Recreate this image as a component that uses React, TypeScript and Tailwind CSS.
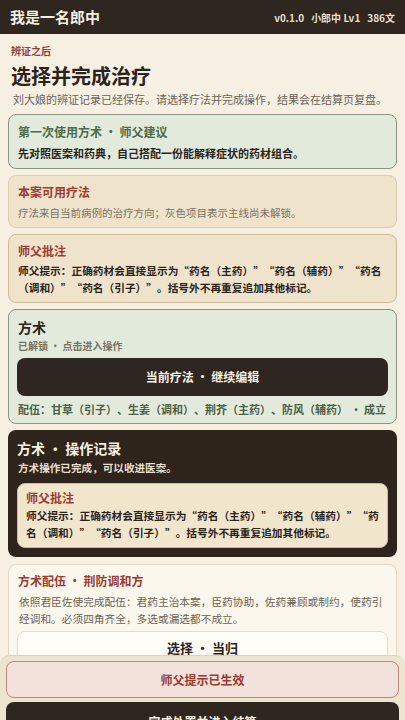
import React from 'react'

const font = { fontFamily: '"Noto Sans CJK SC", "Noto Sans", sans-serif' }

const hint =
  '师父提示：正确药材会直接显示为“药名（主药）”“药名（辅药）”“药名（调和）”“药名（引子）”。括号外不再重复追加其他标记。'

export default function App() {
  return (
    <div lang="zh-CN" className="min-h-screen bg-[#f6efe2] text-[#2b241d] pb-[120px] [text-spacing-trim:space-all]" style={font}>
      {/* ── Header ── */}
      <header className="h-[34px] bg-[#2f261f] flex items-center justify-between px-[10px]">
        <span className="text-[15px] font-bold text-[#f6efe2]">我是一名郎中</span>
        <span className="text-[10px] font-bold text-[#e8dfcf] flex gap-[7px]">
          <span>v0.1.0</span>
          <span>小郎中 Lv1</span>
          <span>386文</span>
        </span>
      </header>

      <main className="px-2 pt-[10px]">
        <p className="px-[3px] text-[10px] font-bold leading-[14px] text-[#9b3b32]">辨证之后</p>
        <h1 className="px-[3px] mt-[4px] text-[20px] font-bold leading-[28px] text-[#2b241d]">选择并完成治疗</h1>
        <p className="pl-[5px] mt-[1px] text-[11px] leading-[16px] text-[#6b6458] whitespace-nowrap">
          刘大娘的辨证记录已经保存。请选择疗法并完成操作，结果会在结算页复盘。
        </p>

        <div className="mt-[7px] flex flex-col gap-[6px]">
          {/* ── First use ── */}
          <section className="rounded-lg border border-[#8b9486] bg-[#e2eadb] px-[9px] pt-[8px] pb-[7px]">
            <p className="text-[12px] font-bold leading-[17px] text-[#4d6b4a]">第一次使用方术 · 师父建议</p>
            <p className="mt-[5px] text-[11px] font-bold leading-[16px]">先对照医案和药典，自己搭配一份能解释症状的药材组合。</p>
          </section>

          {/* ── Available ── */}
          <section className="rounded-lg border border-[#dccdb0] bg-[#efe3cc] px-[9px] pt-[7px] pb-[6px]">
            <p className="text-[12px] font-bold leading-[17px] text-[#9b3b32]">本案可用疗法</p>
            <p className="mt-[5px] text-[10.5px] leading-[16px] text-[#7a7264]">疗法来自当前病例的治疗方向；灰色项目表示主线尚未解锁。</p>
          </section>

          {/* ── Master note ── */}
          <section className="rounded-lg border border-[#cdbb98] bg-[#efe3cc] px-[9px] pt-[7px] pb-[6px]">
            <p className="text-[12px] font-bold leading-[17px] text-[#9b3b32]">师父批注</p>
            <p className="mt-[3px] text-[10.7px] font-bold leading-[17px]">{hint}</p>
          </section>

          {/* ── Fangshu ── */}
          <section className="rounded-lg border border-[#8b9486] bg-[#e2eadb] px-[8px] pt-[7px] pb-[6px]">
            <p className="px-px text-[14px] font-bold leading-[20px]">方术</p>
            <p className="px-px mt-[2px] text-[10px] font-bold leading-[14px] text-[#7a7264]">已解锁 · 点击进入操作</p>
            <button className="mt-[5px] w-full h-[38px] rounded-lg bg-[#2f261f] text-[12px] font-bold text-[#f6efe2]">
              当前疗法 · 继续编辑
            </button>
            <p className="px-px mt-[5px] text-[11px] font-bold leading-[16px] text-[#4d5f49] whitespace-nowrap">
              配伍：甘草（引子）、生姜（调和）、荆芥（主药）、防风（辅药） · 成立
            </p>
          </section>

          {/* ── Record ── */}
          <section className="rounded-lg bg-[#2e241c] px-[9px] pt-[8px] pb-[9px]">
            <p className="text-[14px] font-bold leading-[20px] text-[#f6efe2]">方术 · 操作记录</p>
            <p className="mt-[2px] px-px text-[10.6px] font-bold leading-[16px] text-[#e8dfcf]">方术操作已完成，可以收进医案。</p>
            <div className="mt-[7px] rounded-lg border border-[#cdbb98] bg-[#f1e5cc] px-[8px] pt-[5px] pb-[6px]">
              <p className="text-[12px] font-bold leading-[17px] text-[#9b3b32]">师父批注</p>
              <p className="mt-[1px] text-[10.7px] font-bold leading-[17px] text-[#2b241d]">{hint}</p>
            </div>
          </section>

          {/* ── Peiwu ── */}
          <section className="mt-px rounded-lg border border-[#e3d9c3] bg-[#fbf7ec] px-[8px] pt-[7px] pb-[8px]">
            <p className="px-px text-[12px] font-bold leading-[17px] text-[#9b3b32]">方术配伍 · 荆防调和方</p>
            <p className="px-[2px] mt-[4px] text-[10.7px] leading-[17px] text-[#6b6458]">
              依照君臣佐使完成配伍：君药主治本案，臣药协助，佐药兼顾或制约，使药引经调和。必须四角齐全，多选或漏选都不成立。
            </p>
            <div className="mt-[4px] rounded-lg border border-[#e4dccb] bg-[#fffdf6] pt-[6px] pb-[9px] text-center">
              <p className="text-[13px] font-bold leading-[20px]">选择 · 当归</p>
              <p className="mt-2 text-[11px] text-[#6b6458]">君药 · 主治本案</p>
            </div>
          </section>
        </div>
      </main>

      {/* ── Bottom action bar (overlays content) ── */}
      <div className="fixed inset-x-0 top-[655px] rounded-t-[10px] border-t border-[#ddd2bb] bg-[#ede4d0] px-[6px] pt-[5px] pb-[6px]">
        <div className="h-[37px] rounded-lg border border-[#b98880] bg-[#f3e2dc] flex items-center justify-center text-[12px] font-bold text-[#9b3b32]">
          师父提示已生效
        </div>
        <button className="mt-[4px] w-full h-[40px] rounded-lg bg-[#2f261f] text-[12px] font-bold text-[#f6efe2]">
          完成处置并进入结算
        </button>
      </div>
    </div>
  )
}
